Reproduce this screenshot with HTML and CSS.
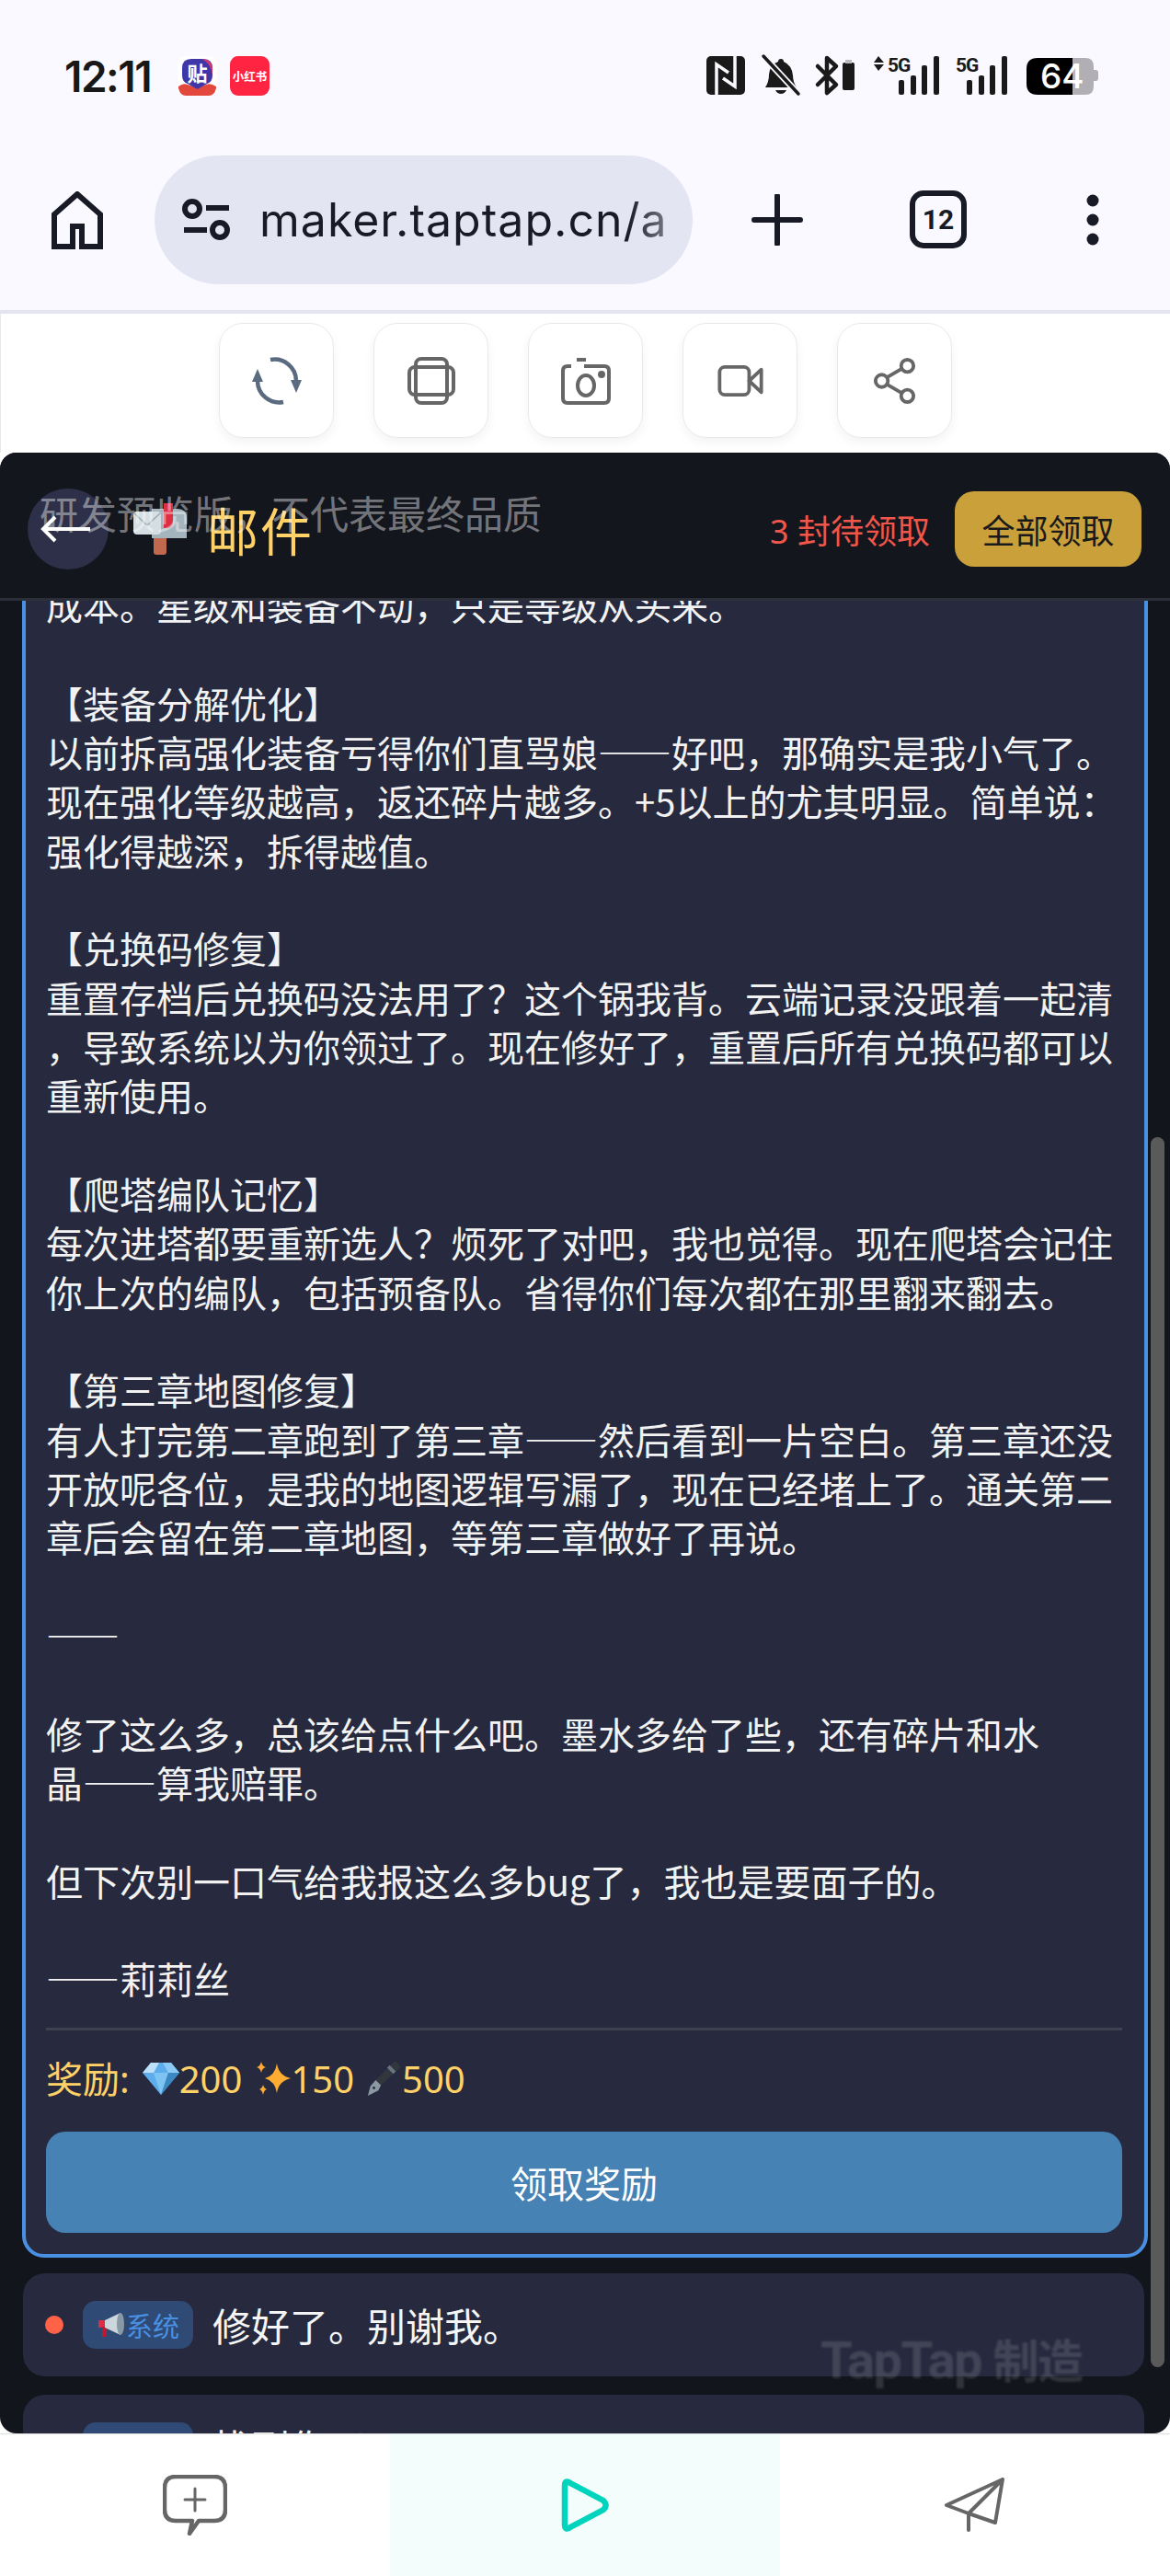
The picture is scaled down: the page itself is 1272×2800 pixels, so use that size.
FILE: index.html
```html
<!DOCTYPE html>
<html lang="zh-CN">
<head>
<meta charset="UTF-8">
<title>邮件</title>
<meta name="viewport" content="width=device-width,initial-scale=1">
<link rel="stylesheet" href="styles.css">
</head>
<body>

<!-- phone status bar -->
<div class="status">
  <span class="clock">12:11</span>
  <svg class="app-ico" viewBox="0 0 43 43">
    <rect width="43" height="43" rx="9" fill="#fff"/>
    <path d="M1 33q5-4 10-2l10 3 10-3q5-2 11 2v2q-2 8-8 8H9q-6 0-8-8z" fill="#e2483c"/>
    <path d="M15 3h13q10 0 10 10v8q0 7-6 9l-10.500 6-10.500-6q-6-2-6-9v-8Q5 3 15 3z" fill="#3f37a8"/>
    <path d="M26 3q11 0 12 10v8q-2-14-12-18z" fill="#d8356b"/>
    <text x="21.500" y="27" class="tie">贴</text>
  </svg>
  <svg class="app-ico" viewBox="0 0 43 43">
    <rect width="43" height="43" rx="9" fill="#ff2442"/>
    <text x="21.500" y="27" class="redbook">小红书</text>
  </svg>
  <svg class="sys-ico" viewBox="768 58 428 48">
    <rect x="768" y="61" width="42" height="42" rx="5" fill="#1a1a1a"/>
    <path d="M779 103V70l13 9M799 61v33l-13-9" fill="none" stroke="#f9f9ff" stroke-width="3.500"/>
    <path d="M849 64q-3 0-3 3-9 3-10 14 0 8-4 14h34q-4-6-4-13-1-11-10-15 0-3-3-3zM843 98h12q-2 4-6 4t-6-4z" fill="#1a1a1a"/>
    <path d="M830 61l38 41" stroke="#f9f9ff" stroke-width="7"/>
    <path d="M830 61l38 41" stroke="#1a1a1a" stroke-width="3.500" stroke-linecap="round"/>
    <path d="M889 72l20 20-10 9V63l10 9-20 20" fill="none" stroke="#1a1a1a" stroke-width="4.500" stroke-linejoin="round" stroke-linecap="round"/>
    <rect x="916" y="68" width="13" height="30" rx="2" fill="#1a1a1a"/>
    <rect x="919" y="65" width="7" height="4" fill="#bbb"/>
    <path d="M955 61l6 7h-11zM955 77l6-7h-11z" fill="#1a1a1a"/>
    <text x="965" y="78" class="five-g">5G</text>
    <g fill="#1a1a1a">
      <rect x="977" y="87" width="6" height="16" rx="2"/><rect x="990" y="82" width="6" height="21" rx="2"/>
      <rect x="1002" y="71" width="6" height="32" rx="2"/><rect x="1015" y="61" width="6" height="42" rx="2"/>
    </g>
    <text x="1039" y="78" class="five-g">5G</text>
    <g fill="#1a1a1a">
      <rect x="1051" y="87" width="6" height="16" rx="2"/><rect x="1064" y="82" width="6" height="21" rx="2"/>
      <rect x="1076" y="71" width="6" height="32" rx="2"/><rect x="1089" y="61" width="6" height="42" rx="2"/>
    </g>
    <path d="M1166 63h14q9 0 9 9v22q0 9-9 9h-14z" fill="#b1aeb4"/>
    <path d="M1189 76h2q3 0 3 3v6q0 3-3 3h-2z" fill="#b1aeb4"/>
    <path d="M1166 63h-38q-12 0-12 12v16q0 12 12 12h38z" fill="#000"/>
    <text x="1131" y="96" class="batt">64</text>
  </svg>
</div>

<!-- browser toolbar -->
<div class="toolbar">
  <svg class="home" viewBox="0 0 56 63"><path d="M28 3L3 25v35h20V38h10v22h20V25z" fill="none" stroke="#181a25" stroke-width="6"/></svg>
  <div class="url">
    <svg class="tune" viewBox="0 0 52 46" fill="none" stroke="#181a25" stroke-width="6">
      <circle cx="11" cy="11" r="8"/><path d="M26 10h25M2 34h25"/><circle cx="41" cy="34" r="8"/>
    </svg>
    <span class="addr">maker.taptap.cn/a</span>
  </div>
  <svg class="plus" viewBox="0 0 56 56"><path d="M28 2v52M3 28h50" stroke="#181a25" stroke-width="6" stroke-linecap="round"/></svg>
  <div class="tabs">12</div>
  <svg class="more" viewBox="0 0 14 56" fill="#181a25"><circle cx="7" cy="7" r="6.500"/><circle cx="7" cy="28" r="6.500"/><circle cx="7" cy="49" r="6.500"/></svg>
</div>

<!-- game tools -->
<div class="tools">
  <div class="tool"><svg viewBox="0 0 52 52" fill="none" stroke="#5a6b80" stroke-width="4.500">
    <path d="M19 3A23.500 23.500 0 0 1 47 26"/><path d="M33 49A23.500 23.500 0 0 1 5 26"/>
    <path d="M5 13l6 14H-1zM47 39l6-14H41z" fill="#5a6b80" stroke="none"/>
  </svg></div>
  <div class="tool"><svg viewBox="0 0 52 52" fill="none" stroke="#666" stroke-width="4">
    <rect x="9" y="2" width="34" height="48" rx="6"/><rect x="2" y="11" width="48" height="30" rx="6"/>
  </svg></div>
  <div class="tool"><svg viewBox="0 0 56 52" fill="none" stroke="#666" stroke-width="4">
    <path d="M12 10H8q-5 0-5 5v30q0 5 5 5h40q5 0 5-5V15q0-5-5-5H26"/><path d="M18 3h10"/>
    <ellipse cx="28" cy="31" rx="9" ry="11"/><circle cx="45" cy="19" r="2" fill="#666"/>
  </svg></div>
  <div class="tool"><svg viewBox="0 0 52 36" fill="none" stroke="#666" stroke-width="4">
    <rect x="2" y="2" width="34" height="32" rx="6"/><path d="M36 18l14-13v26z" stroke-linejoin="round"/>
  </svg></div>
  <div class="tool"><svg viewBox="0 0 50 52" fill="none" stroke="#666" stroke-width="4">
    <circle cx="39" cy="9" r="7"/><circle cx="10" cy="26" r="7"/><circle cx="39" cy="43" r="7"/><path d="M16 22l17-10M16 30l17 10"/>
  </svg></div>
</div>

<!-- mail screen -->
<div class="app">
  <header class="mail-head">
    <button class="back"><svg viewBox="0 0 56 30" fill="none" stroke="#fff" stroke-width="4"><path d="M55 15H4M17 2L4 15l13 13"/></svg></button>
    <svg class="mailbox" viewBox="0 0 58 56">
      <rect x="22" y="34" width="14" height="22" rx="3" fill="#c1694f"/>
      <path d="M20 6h28q10 0 10 10v22H20z" fill="#a5b5be"/>
      <path d="M33 0h10v18q0 8-5 9h-5z" fill="#dd2e44"/>
      <rect x="0" y="9" width="30" height="25" rx="4" fill="#d4dee3"/>
      <path d="M1 11l14 13 14-13" fill="none" stroke="#99aab5" stroke-width="1.500"/>
    </svg>
    <h1>邮件</h1>
    <span class="pending">3 封待领取</span>
    <button class="claim-all">全部领取</button>
  </header>

  <div class="list">
    <article class="mail open">
      <div class="body">成本。星级和装备不动，只是等级从头来。

【装备分解优化】
以前拆高强化装备亏得你们直骂娘——好吧，那确实是我小气了。
现在强化等级越高，返还碎片越多。+5以上的尤其明显。简单说：
强化得越深，拆得越值。

【兑换码修复】
重置存档后兑换码没法用了？这个锅我背。云端记录没跟着一起清
，导致系统以为你领过了。现在修好了，重置后所有兑换码都可以
重新使用。

【爬塔编队记忆】
每次进塔都要重新选人？烦死了对吧，我也觉得。现在爬塔会记住
你上次的编队，包括预备队。省得你们每次都在那里翻来翻去。

【第三章地图修复】
有人打完第二章跑到了第三章——然后看到一片空白。第三章还没
开放呢各位，是我的地图逻辑写漏了，现在已经堵上了。通关第二
章后会留在第二章地图，等第三章做好了再说。

——

修了这么多，总该给点什么吧。墨水多给了些，还有碎片和水
晶——算我赔罪。

但下次别一口气给我报这么多bug了，我也是要面子的。

——莉莉丝</div>
      <div class="rewards"><span>奖励:</span>
        <svg class="emo gem" viewBox="0 0 40 36">
          <path d="M9 1h22l9 11-20 24L0 12z" fill="#5dadec"/>
          <path d="M9 1h9l-6 11H0z" fill="#bde0f8"/><path d="M22 1h9l9 11H28z" fill="#8ccaf5"/>
          <path d="M12 12h16l-8 24z" fill="#7fc3f2"/><path d="M28 12h12L20 36z" fill="#3b88c3"/>
        </svg><span>200</span>
        <svg class="emo star" viewBox="0 0 38 38" fill="#ffac33">
          <path d="M23 3q2 13 15 16-13 3-15 16-2-13-13-16 11-3 13-16z"/>
          <path d="M6 1q1 5 5 6-4 1-5 6-1-5-5-6 4-1 5-6zM8 26q1 4 4 5-3 1-4 6-1-5-4-6 3-1 4-5z"/>
        </svg><span>150</span>
        <svg class="emo pen" viewBox="0 0 40 40">
          <path d="M33 0l7 7-23 21-6-6z" fill="#31373d"/><path d="M27 5l7 7-3 3-7-7z" fill="#66757f"/>
          <path d="M11 22l6 6-3 6-12 6 3-11z" fill="#8a99a3"/><circle cx="9" cy="31" r="1.500" fill="#272a3e"/>
        </svg><span>500</span>
      </div>
      <button class="claim">领取奖励</button>
    </article>

    <article class="mail row">
      <i class="dot"></i>
      <span class="tag"><svg class="horn" viewBox="0 0 30 30">
        <path d="M2 10h8v8H2z" fill="#dd2e44"/><path d="M6 17h6l-2 11H6z" fill="#be1931"/>
        <path d="M9 10l17-8v24L9 18z" fill="#ccd6dd"/><ellipse cx="26" cy="14" rx="4" ry="12" fill="#8899a6"/>
      </svg>系统</span>
      <span class="subject">修好了。别谢我。</span>
    </article>

    <article class="mail row">
      <i class="dot hidden"></i>
      <span class="tag"></span>
      <span class="subject">找到你了</span>
    </article>

    <div class="scrollbar"></div>
  </div>

  <!-- overlays -->
  <div class="preview-note">研发预览版，不代表最终品质</div>
  <div class="brand">TapTap <span>制造</span></div>
</div>

<nav class="bottom">
  <a><svg viewBox="0 0 70 66" fill="none" stroke="#666" stroke-width="4.500" stroke-linecap="round" stroke-linejoin="round">
    <path d="M14 2h42q12 0 12 12v24q0 12-12 12H39l-10 14 3-14H14Q2 50 2 38V14Q2 2 14 2z"/><path d="M35 15v24M24 27h22" stroke-width="3"/>
  </svg></a>
  <a class="on"><svg viewBox="0 0 54 60" fill="none" stroke="#00d4bc" stroke-width="6.500" stroke-linejoin="round">
    <path d="M5 9q0-7 6-3l36 19q5 5 0 10L11 54q-6 4-6-3z"/>
  </svg></a>
  <a><svg viewBox="0 0 66 60" fill="none" stroke="#666" stroke-width="4" stroke-linejoin="round" stroke-linecap="round">
    <path d="M63 2L2 30l24 9 29 10zM63 2L26 39v18"/>
  </svg></a>
</nav>

</body>
</html>
```

FILE: styles.css
```css
*{box-sizing:border-box;margin:0}
html,body{width:1272px;height:2800px;overflow:hidden}
body{display:flex;flex-direction:column;background:#fff;font-family:"Noto Sans","Noto Sans CJK SC",sans-serif;color:#fff}
button{font:inherit;border:0;padding:0}

/* status bar */
.status{height:169px;background:#f9f9ff;padding:61px 76px 0 70px;display:flex;align-items:flex-start}
.clock{font:600 46px/1 Inter,sans-serif;color:#181818;letter-spacing:-1.500px;width:123px;margin-top:-1px}
.app-ico{width:43px;height:43px;margin-right:14px}
.sys-ico{width:428px;height:48px;margin-left:auto;margin-top:-3px}
.tie{font:700 22px "Noto Sans CJK SC";fill:#fff;text-anchor:middle}
.redbook{font:700 12.500px "Noto Sans CJK SC";fill:#fff;text-anchor:middle}
.five-g{font:700 21px Roboto,sans-serif;fill:#1a1a1a;letter-spacing:-1px}
.batt{font:500 37px Inter,sans-serif;fill:#fff}

/* browser toolbar */
.toolbar{height:172px;background:#f9f9ff;border-bottom:4px solid #e3e4ef;display:flex;align-items:flex-start;padding-left:56px}
.home{width:56px;height:63px;margin-top:39px}
.url{width:585px;height:140px;margin-left:56px;border-radius:70px;background:#e3e5f2;display:flex;align-items:center;padding-left:30px;overflow:hidden}
.tune{width:52px;height:46px;margin-right:32px;flex:none}
.addr{font:400 50px Inter,sans-serif;letter-spacing:1px;color:#181a25;white-space:nowrap;-webkit-mask-image:linear-gradient(90deg,#000 90%,#0008 100%);mask-image:linear-gradient(90deg,#000 90%,#0008 100%)}
.plus{width:56px;height:56px;margin:42px 0 0 64px}
.tabs{width:62px;height:63px;margin:38px 0 0 116px;border:6px solid #181a25;border-radius:15px;color:#181a25;font:700 30px/51px Roboto,sans-serif;text-align:center}
.more{width:14px;height:56px;margin:42px 0 0 130px}

/* tool buttons */
.tools{height:151px;display:flex;justify-content:center;gap:43px;padding-top:10px;border-left:1px solid #e8e8ec}
.tool{width:125px;height:125px;border:1px solid #e9e9e9;border-radius:26px;box-shadow:0 5px 12px rgba(0,0,0,.05);display:flex;align-items:center;justify-content:center}
.tool:nth-child(1) svg{width:52px;height:52px;overflow:visible}
.tool:nth-child(2) svg{width:52px;height:52px}
.tool:nth-child(3) svg{width:56px;height:52px}
.tool:nth-child(4) svg{width:50px;height:34px}
.tool:nth-child(5) svg{width:48px;height:52px}

/* mail screen */
.app{flex:1;position:relative;background:#13151d;border-radius:18px;overflow:hidden;display:flex;flex-direction:column;min-height:0}
.mail-head{height:161px;flex:none;background:#14161e;border-bottom:3px solid #2c2e39;display:flex;align-items:center;padding:8px 31px 0 30px}
.back{width:88px;height:88px;border-radius:50%;background:#2d3048;display:flex;align-items:center;justify-content:center;flex:none}
.back svg{width:56px;height:30px;margin-left:-6px}
.mailbox{width:58px;height:56px;margin-left:27px;flex:none}
h1{font:400 56px/1 "Noto Sans CJK SC",sans-serif;color:#ffd166;margin-left:22px;letter-spacing:2px}
.pending{margin-left:auto;font-size:36px;color:#f0564a}
.claim-all{width:203px;height:82px;margin-left:27px;border-radius:21px;background:#c9a03a;color:#1a1a1a;font-size:36px}

.list{flex:1;position:relative;overflow:hidden;padding:0 24px;min-height:0}
.mail{background:#272a3e;border-radius:24px;width:1224px;margin-bottom:16px}
.open{margin-top:-44px;border:4px solid #4a90e2;padding:18px 24px 23px 22px;margin-bottom:17px}
.body{font-family:"Noto Sans CJK SC",sans-serif;font-size:40px;line-height:53.330px;white-space:pre;color:#f2f2f2;padding-bottom:26px;border-bottom:3px solid #3f4150}
.rewards{font-size:40px;line-height:53px;color:#ffd166;padding-top:26px;margin-bottom:31px;display:flex;align-items:center}
.emo{height:38px;flex:none}
.gem{width:40px;margin-left:14px}
.star{width:38px;margin-left:15px}
.pen{width:40px;margin-left:12px}
.claim{display:block;width:1170px;height:110px;border-radius:21px;background:#4682b4;color:#fff;font-size:40px}
.row{height:112px;display:flex;align-items:center;padding:0 0 0 24px;margin-bottom:20px;width:1219px;margin-left:1px}
.dot{width:20px;height:20px;border-radius:50%;background:#ff6247;flex:none}
.dot.hidden{visibility:hidden}
.tag{width:120px;height:52px;margin-left:21px;border-radius:14px;background:#2f4a75;color:#4a90e2;font-size:29px;display:flex;align-items:center;padding-left:15px;flex:none}
.horn{width:30px;height:30px;margin-right:2px}
.subject{font-size:42px;margin-left:21px;color:#f5f5f5}
.scrollbar{position:absolute;left:1251px;top:583px;width:15px;height:1337px;border-radius:8px;background:#5a5a5a}

.preview-note{position:absolute;left:43px;top:42px;font-size:42px;line-height:50px;color:rgba(255,255,255,.42);white-space:nowrap}
.brand{position:absolute;left:892px;top:2035px;font:700 56px/70px Roboto,sans-serif;color:rgba(255,255,255,.13);white-space:nowrap;filter:blur(1px);letter-spacing:-1.500px}
.brand span{font:700 50px "Noto Sans CJK SC",sans-serif}

/* bottom nav */
.bottom{height:155px;flex:none;display:grid;grid-template-columns:repeat(3,1fr);background:#fff;border-top:1px solid #ddd}
.bottom a{display:flex;align-items:center;justify-content:center}
.bottom .on{background:#f3fdfb}
.bottom svg{flex:none}
.bottom a:nth-child(1) svg{width:70px;height:66px}
.bottom a:nth-child(2) svg{width:54px;height:60px}
.bottom a:nth-child(3) svg{width:66px;height:60px}
```
